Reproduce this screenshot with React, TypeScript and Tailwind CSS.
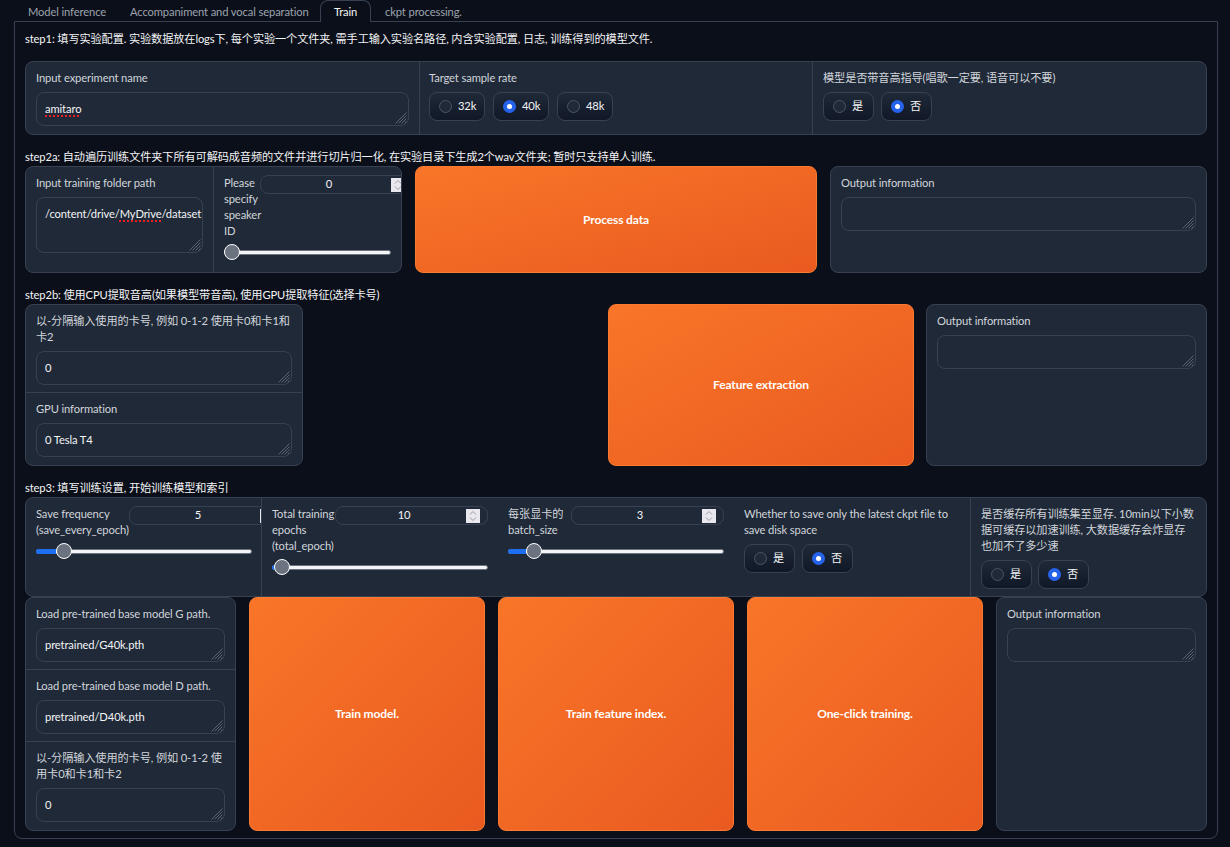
import React from "react";

function Handle() {
  return (
    <svg className="absolute right-[1px] bottom-[1px]" width="12" height="12" viewBox="0 0 12 12" fill="none" stroke="#6b7280" strokeWidth="0.8">
      <path d="M11.5 0.5 L0.5 11.5 M11.5 3.5 L3.5 11.5 M11.5 6.5 L6.5 11.5 M11.5 9.5 L9.5 11.5" />
    </svg>
  );
}

function Area({ h = "h-[34px]", children }: { h?: string; children?: React.ReactNode }) {
  return (
    <div className={`relative ${h} rounded-lg border border-[#374151] bg-[#1f2937] px-2 pt-[8px] leading-4 whitespace-nowrap text-[#f3f4f6]`}>
      {children}
      <Handle />
    </div>
  );
}

function Squiggle({ children }: { children: React.ReactNode }) {
  return <span className="underline decoration-dotted decoration-[#ef1c24] decoration-[1.5px] underline-offset-2">{children}</span>;
}

function Radio({ label, checked, w }: { label: string; checked?: boolean; w: string }) {
  return (
    <div className={`flex ${w} h-[29px] items-center gap-[6px] rounded-lg border border-[#374151] bg-gradient-to-b from-[#1f2937] to-[#111827] pl-[9px] text-[#f3f4f6]`}>
      {checked ? (
        <span className="flex h-[13px] w-[13px] items-center justify-center rounded-full bg-[#2563eb]">
          <span className="h-[5px] w-[5px] rounded-full bg-white" />
        </span>
      ) : (
        <span className="h-[13px] w-[13px] rounded-full border border-[#4b5563] bg-[#1f2937]" />
      )}
      <span>{label}</span>
    </div>
  );
}

function Spinner() {
  return (
    <span className="absolute right-[7px] top-[2px] flex h-[14px] w-[14px] items-center justify-center bg-[#e8e8ee]">
      <svg width="8" height="12" viewBox="0 0 8 12" fill="none" stroke="#9a9aa2" strokeWidth="1">
        <path d="M1 4.5 L4 1.5 L7 4.5 M1 7.5 L4 10.5 L7 7.5" />
      </svg>
    </span>
  );
}

function NumberBox({ value }: { value: string }) {
  return (
    <div className="relative flex h-[19px] w-[153px] shrink-0 items-center rounded-lg border border-[#374151] bg-[#1f2937] pr-[15px] text-[#f3f4f6]">
      <span className="w-full text-center">{value}</span>
      <Spinner />
    </div>
  );
}

function Slider({ fill, thumb }: { fill: string; thumb: string }) {
  return (
    <div className="relative mt-[5px] flex h-[16px] items-center">
      <div className="h-[5px] w-full rounded-full border border-[#6b7280] bg-[#f3f4f6]" />
      <div className={`absolute left-0 h-[5px] rounded-l-full bg-[#1d6ff0] ${fill}`} />
      <div className={`absolute h-[16px] w-[16px] rounded-full border border-white bg-[#6b7280] ${thumb}`} />
    </div>
  );
}

function Field({ label, value, last }: { label: React.ReactNode; value: React.ReactNode; last?: boolean }) {
  return (
    <div className={`flex flex-col gap-[6px] px-[10px] pt-[8px] pb-[7px] ${last ? "" : "border-b border-[#374151]"}`}>
      <div className="leading-4 text-[#d1d5db]">{label}</div>
      <Area>{value}</Area>
    </div>
  );
}

function Output({ cls }: { cls: string }) {
  return (
    <div className={`rounded-lg border border-[#374151] bg-[#1f2937] px-[10px] pt-[8px] ${cls}`}>
      <div className="mb-[6px] leading-4 text-[#d1d5db]">Output information</div>
      <Area />
    </div>
  );
}

function Btn({ label, cls }: { label: string; cls: string }) {
  return (
    <div className={`flex items-center justify-center rounded-lg border border-[#f97a30] bg-gradient-to-br from-[#f97528] to-[#e95a20] text-[12px] font-bold text-white ${cls}`}>
      {label}
    </div>
  );
}

function Step({ children, mt }: { children: React.ReactNode; mt: string }) {
  return <div className={`${mt} leading-4 text-[#f3f4f6]`}>{children}</div>;
}

export default function App() {
  return (
    <div className="h-[847px] w-[1230px] overflow-hidden bg-[#0b0f19] pr-[12px] pl-[14px] font-['Lato','Noto_Sans_CJK_SC',sans-serif] text-[11.2px] tracking-[-0.12px]">
      <div className="relative z-10 flex h-[22px] pl-[14px] whitespace-nowrap text-[#9ca3af]">
        <div className="w-[102px] pt-[4px] leading-4">Model inference</div>
        <div className="w-[190px] pt-[4px] leading-4">Accompaniment and vocal separation</div>
        <div className="h-[22px] w-[51px] rounded-t-lg border border-b-0 border-[#374151] bg-[#0b0f19] pt-[3px] text-center leading-4 text-[#f3f4f6]">Train</div>
        <div className="pt-[4px] pl-[14px] leading-4">ckpt processing.</div>
      </div>

      <div className="-mt-px h-[818px] rounded-b-lg border border-[#374151] px-[10px] pt-[9px]">
        <Step mt="mt-0">step1: 填写实验配置. 实验数据放在logs下, 每个实验一个文件夹, 需手工输入实验名路径, 内含实验配置, 日志, 训练得到的模型文件.</Step>

        <div className="mt-[14px] flex h-[74px] rounded-lg border border-[#374151] bg-[#1f2937]">
          <div className="flex-1 px-[10px] pt-[8px]">
            <div className="mb-[6px] leading-4 text-[#d1d5db]">Input experiment name</div>
            <Area><Squiggle>amitaro</Squiggle></Area>
          </div>
          <div className="flex-1 border-l border-[#374151] pt-[8px] pr-[10px] pl-[9px]">
            <div className="mb-[6px] leading-4 text-[#d1d5db]">Target sample rate</div>
            <div className="flex gap-[8px]">
              <Radio label="32k" w="w-[56px]" />
              <Radio label="40k" checked w="w-[56px]" />
              <Radio label="48k" w="w-[56px]" />
            </div>
          </div>
          <div className="flex-1 border-l border-[#374151] px-[10px] pt-[8px]">
            <div className="mb-[6px] leading-4 text-[#d1d5db]">模型是否带音高指导(唱歌一定要, 语音可以不要)</div>
            <div className="flex gap-[7px]">
              <Radio label="是" w="w-[51px]" />
              <Radio label="否" checked w="w-[51px]" />
            </div>
          </div>
        </div>

        <Step mt="mt-[14px]">step2a: 自动遍历训练文件夹下所有可解码成音频的文件并进行切片归一化, 在实验目录下生成2个wav文件夹; 暂时只支持单人训练.</Step>
        <div className="mt-px flex h-[107px] gap-[13px]">
          <div className="flex w-[377px] overflow-hidden rounded-lg border border-[#374151] bg-[#1f2937]">
            <div className="w-[188px] shrink-0 border-r border-[#374151] px-[10px] pt-[8px]">
              <div className="mb-[6px] leading-4 text-[#d1d5db]">Input training folder path</div>
              <Area h="h-[56px]">/content/drive/<Squiggle>MyDrive</Squiggle>/dataset</Area>
            </div>
            <div className="min-w-0 flex-1 pt-[8px] pl-[10px]">
              <div className="flex">
                <div className="w-[36px] shrink-0 leading-4 text-[#d1d5db]">Please specify speaker ID</div>
                <NumberBox value="0" />
              </div>
              <div className="w-[167px]">
                <Slider fill="w-0" thumb="left-0" />
              </div>
            </div>
          </div>
          <Btn label="Process data" cls="w-[402px]" />
          <Output cls="flex-1" />
        </div>

        <Step mt="mt-[14px]">step2b: 使用CPU提取音高(如果模型带音高), 使用GPU提取特征(选择卡号)</Step>
        <div className="mt-px flex h-[162px] gap-[12px]">
          <div className="w-[278px] rounded-lg border border-[#374151] bg-[#1f2937]">
            <Field label="以-分隔输入使用的卡号, 例如 0-1-2 使用卡0和卡1和卡2" value="0" />
            <Field label="GPU information" value="0 Tesla T4" last />
          </div>
          <div className="w-[281px]" />
          <Btn label="Feature extraction" cls="w-[306px]" />
          <Output cls="flex-1" />
        </div>

        <Step mt="mt-[14px]">step3: 填写训练设置, 开始训练模型和索引</Step>
        <div className="mt-px flex h-[100px] overflow-hidden rounded-lg border border-[#374151] bg-[#1f2937]">
          <div className="w-[236px] shrink-0 overflow-hidden border-r border-[#374151] pt-[8px] pl-[10px]">
            <div className="flex">
              <div className="w-[93px] shrink-0 leading-4 text-[#d1d5db]">Save frequency (save_every_epoch)</div>
              <NumberBox value="5" />
            </div>
            <div className="w-[216px]"><Slider fill="w-[20px]" thumb="left-[20px]" /></div>
          </div>
          <div className="w-[236px] shrink-0 px-[10px] pt-[8px]">
            <div className="flex">
              <div className="w-[63px] shrink-0 leading-4 text-[#d1d5db]">Total training epochs (total_epoch)</div>
              <NumberBox value="10" />
            </div>
            <Slider fill="w-[4px]" thumb="left-[2px]" />
          </div>
          <div className="w-[236px] shrink-0 px-[10px] pt-[8px]">
            <div className="flex">
              <div className="w-[63px] shrink-0 leading-4 text-[#d1d5db]">每张显卡的batch_size</div>
              <NumberBox value="3" />
            </div>
            <Slider fill="w-[18px]" thumb="left-[18px]" />
          </div>
          <div className="w-[236px] shrink-0 px-[10px] pt-[8px]">
            <div className="mb-[6px] leading-4 text-[#d1d5db]">Whether to save only the latest ckpt file to save disk space</div>
            <div className="flex gap-[7px]">
              <Radio label="是" w="w-[51px]" />
              <Radio label="否" checked w="w-[51px]" />
            </div>
          </div>
          <div className="flex-1 border-l border-[#374151] px-[10px] pt-[8px]">
            <div className="mb-[6px] leading-4 text-[#d1d5db]">是否缓存所有训练集至显存. 10min以下小数据可缓存以加速训练, 大数据缓存会炸显存也加不了多少速</div>
            <div className="flex gap-[6px]">
              <Radio label="是" w="w-[51px]" />
              <Radio label="否" checked w="w-[51px]" />
            </div>
          </div>
        </div>

        <div className="flex h-[234px] gap-[13px]">
          <div className="w-[211px] rounded-lg border border-[#374151] bg-[#1f2937]">
            <Field label="Load pre-trained base model G path." value="pretrained/G40k.pth" />
            <Field label="Load pre-trained base model D path." value="pretrained/D40k.pth" />
            <Field label="以-分隔输入使用的卡号, 例如 0-1-2 使用卡0和卡1和卡2" value="0" last />
          </div>
          <Btn label="Train model." cls="w-[236px]" />
          <Btn label="Train feature index." cls="w-[236px]" />
          <Btn label="One-click training." cls="w-[236px]" />
          <Output cls="flex-1" />
        </div>
      </div>
    </div>
  );
}
